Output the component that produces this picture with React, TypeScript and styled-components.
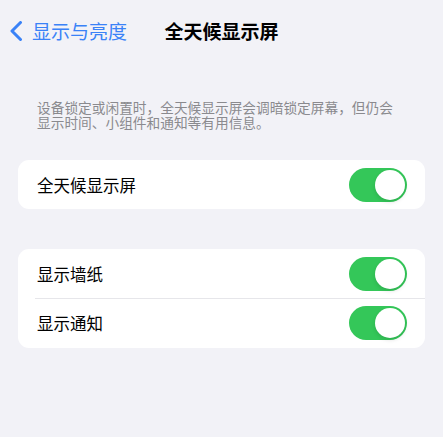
import React from 'react';
import styled, { createGlobalStyle } from 'styled-components';

const GlobalStyle = createGlobalStyle`
  html, body {
    margin: 0;
    padding: 0;
    background: #f2f2f7;
    font-family: "Noto Sans CJK SC", "Noto Sans", sans-serif;
    -webkit-font-smoothing: antialiased;
  }
`;

const Page = styled.div`
  width: 443px;
  min-height: 437px;
  background: #f2f2f7;
`;

const NavBar = styled.div`
  display: grid;
  grid-template-columns: 1fr auto 1fr;
  align-items: center;
  height: 62px;
`;

const BackButton = styled.div`
  display: flex;
  align-items: center;
  gap: 9px;
  padding-left: 9px;
  color: #3a82f7;
  font-size: 19px;
  line-height: 24px;
`;

const Title = styled.div`
  font-size: 19px;
  font-weight: 700;
  color: #000;
  line-height: 24px;
`;

const Note = styled.p`
  margin: 38px 0 30px;
  padding: 0 44px 0 37px;
  font-size: 13.7px;
  line-height: 15px;
  color: #8a8a8e;
`;

const Group = styled.div<{ $gap?: number }>`
  margin: 0 18px ${p => p.$gap ?? 0}px;
  background: #fff;
  border-radius: 11px;
  overflow: hidden;
`;

const Row = styled.div`
  position: relative;
  display: flex;
  align-items: center;
  justify-content: space-between;
  height: 49px;
  padding: 0 18px 0 19px;
  & + & {
    height: 50px;
  }
  & + &::before {
    content: '';
    position: absolute;
    top: 0;
    left: 17px;
    right: 0;
    height: 1px;
    background: #e6e6ea;
  }
`;

const Label = styled.span`
  font-size: 16.5px;
  color: #000;
`;

const Track = styled.div<{ $on: boolean }>`
  width: 58px;
  height: 34px;
  border-radius: 17px;
  background: ${p => (p.$on ? '#34c759' : '#e9e9ea')};
  display: flex;
  align-items: center;
  justify-content: ${p => (p.$on ? 'flex-end' : 'flex-start')};
  padding: 0 2px;
  box-sizing: border-box;
`;

const Knob = styled.div`
  width: 30px;
  height: 30px;
  border-radius: 50%;
  background: #fff;
  box-shadow: 0 2px 4px rgba(0, 0, 0, 0.12);
`;

const Toggle: React.FC<{ on?: boolean }> = ({ on = true }) => (
  <Track $on={on}>
    <Knob />
  </Track>
);

const Chevron = () => (
  <svg width="14" height="20" viewBox="0 0 14 20" fill="none">
    <path d="M11.5 1.5 L3 10 L11.5 18.5" stroke="#3a82f7" strokeWidth="3" strokeLinecap="round" strokeLinejoin="round" />
  </svg>
);

export default function App() {
  return (
    <Page>
      <GlobalStyle />
      <NavBar>
        <BackButton>
          <Chevron />
          <span>显示与亮度</span>
        </BackButton>
        <Title>全天候显示屏</Title>
        <div />
      </NavBar>
      <Note>设备锁定或闲置时，全天候显示屏会调暗锁定屏幕，但仍会显示时间、小组件和通知等有用信息。</Note>
      <Group $gap={40}>
        <Row>
          <Label>全天候显示屏</Label>
          <Toggle />
        </Row>
      </Group>
      <Group>
        <Row>
          <Label>显示墙纸</Label>
          <Toggle />
        </Row>
        <Row>
          <Label>显示通知</Label>
          <Toggle />
        </Row>
      </Group>
    </Page>
  );
}
